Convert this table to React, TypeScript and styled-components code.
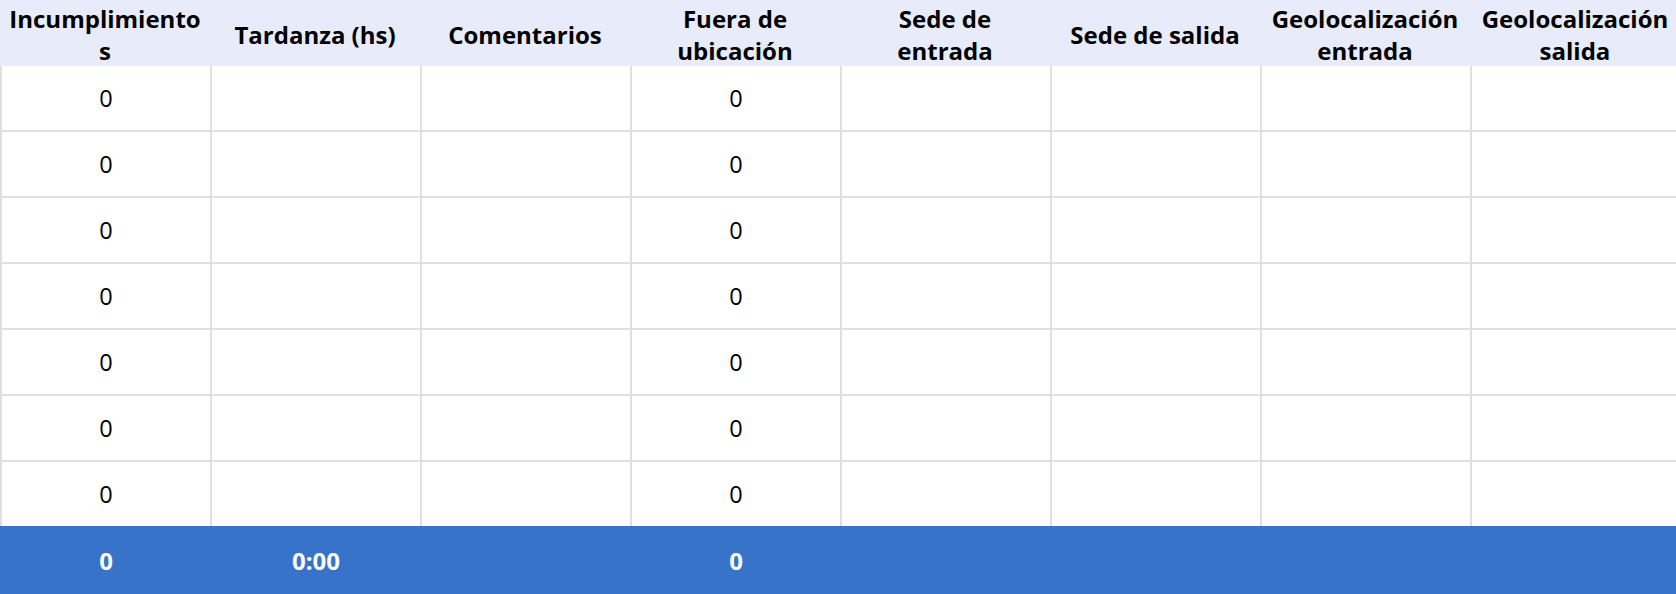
import React from "react";
import styled, { createGlobalStyle } from "styled-components";

const GlobalStyle = createGlobalStyle`
  html, body {
    margin: 0;
    padding: 0;
    background: #ffffff;
    overflow: hidden;
  }
  body {
    font-family: "Open Sans", "Noto Sans", sans-serif;
    color: #000000;
  }
`;

const Sheet = styled.div`
  display: grid;
  grid-template-columns: repeat(8, 210px);
  width: 1676px;
  height: 594px;
  overflow: hidden;
`;

const HeaderCell = styled.div`
  box-sizing: border-box;
  height: 66px;
  padding: 4px 8.5px 0;
  background: #e8ebfa;
  overflow: hidden;
  display: flex;
  flex-direction: column;
  justify-content: center;
  align-items: center;
  text-align: center;
  font-weight: 700;
  font-size: 24px;
  line-height: 32px;
  overflow-wrap: anywhere;
`;

const BodyCell = styled.div<{ $last: boolean }>`
  box-sizing: border-box;
  height: ${(p) => (p.$last ? "64px" : "66px")};
  border-left: 2px solid #e0e0e0;
  border-bottom: ${(p) => (p.$last ? "none" : "2px solid #e0e0e0")};
  display: flex;
  align-items: center;
  justify-content: center;
  font-size: 23.5px;
  color: #000000;
`;

const FooterCell = styled.div`
  box-sizing: border-box;
  height: 68px;
  background: #3873ca;
  display: flex;
  align-items: center;
  justify-content: center;
  padding-left: 2px;
  font-size: 24px;
  font-weight: 700;
  color: #ffffff;
`;

const headers = [
  "Incumplimientos",
  "Tardanza (hs)",
  "Comentarios",
  "Fuera de ubicación",
  "Sede de entrada",
  "Sede de salida",
  "Geolocalización entrada",
  "Geolocalización salida",
];

const rowValues = ["0", "", "", "0", "", "", "", ""];
const footerValues = ["0", "0:00", "", "0", "", "", "", ""];
const ROWS = 7;

export default function App() {
  return (
    <>
      <GlobalStyle />
      <Sheet>
        {headers.map((h) => (
          <HeaderCell key={h}>{h}</HeaderCell>
        ))}
        {Array.from({ length: ROWS }).map((_, r) =>
          rowValues.map((v, c) => (
            <BodyCell key={`${r}-${c}`} $last={r === ROWS - 1}>
              {v}
            </BodyCell>
          ))
        )}
        {footerValues.map((v, c) => (
          <FooterCell key={`f-${c}`}>{v}</FooterCell>
        ))}
      </Sheet>
    </>
  );
}
